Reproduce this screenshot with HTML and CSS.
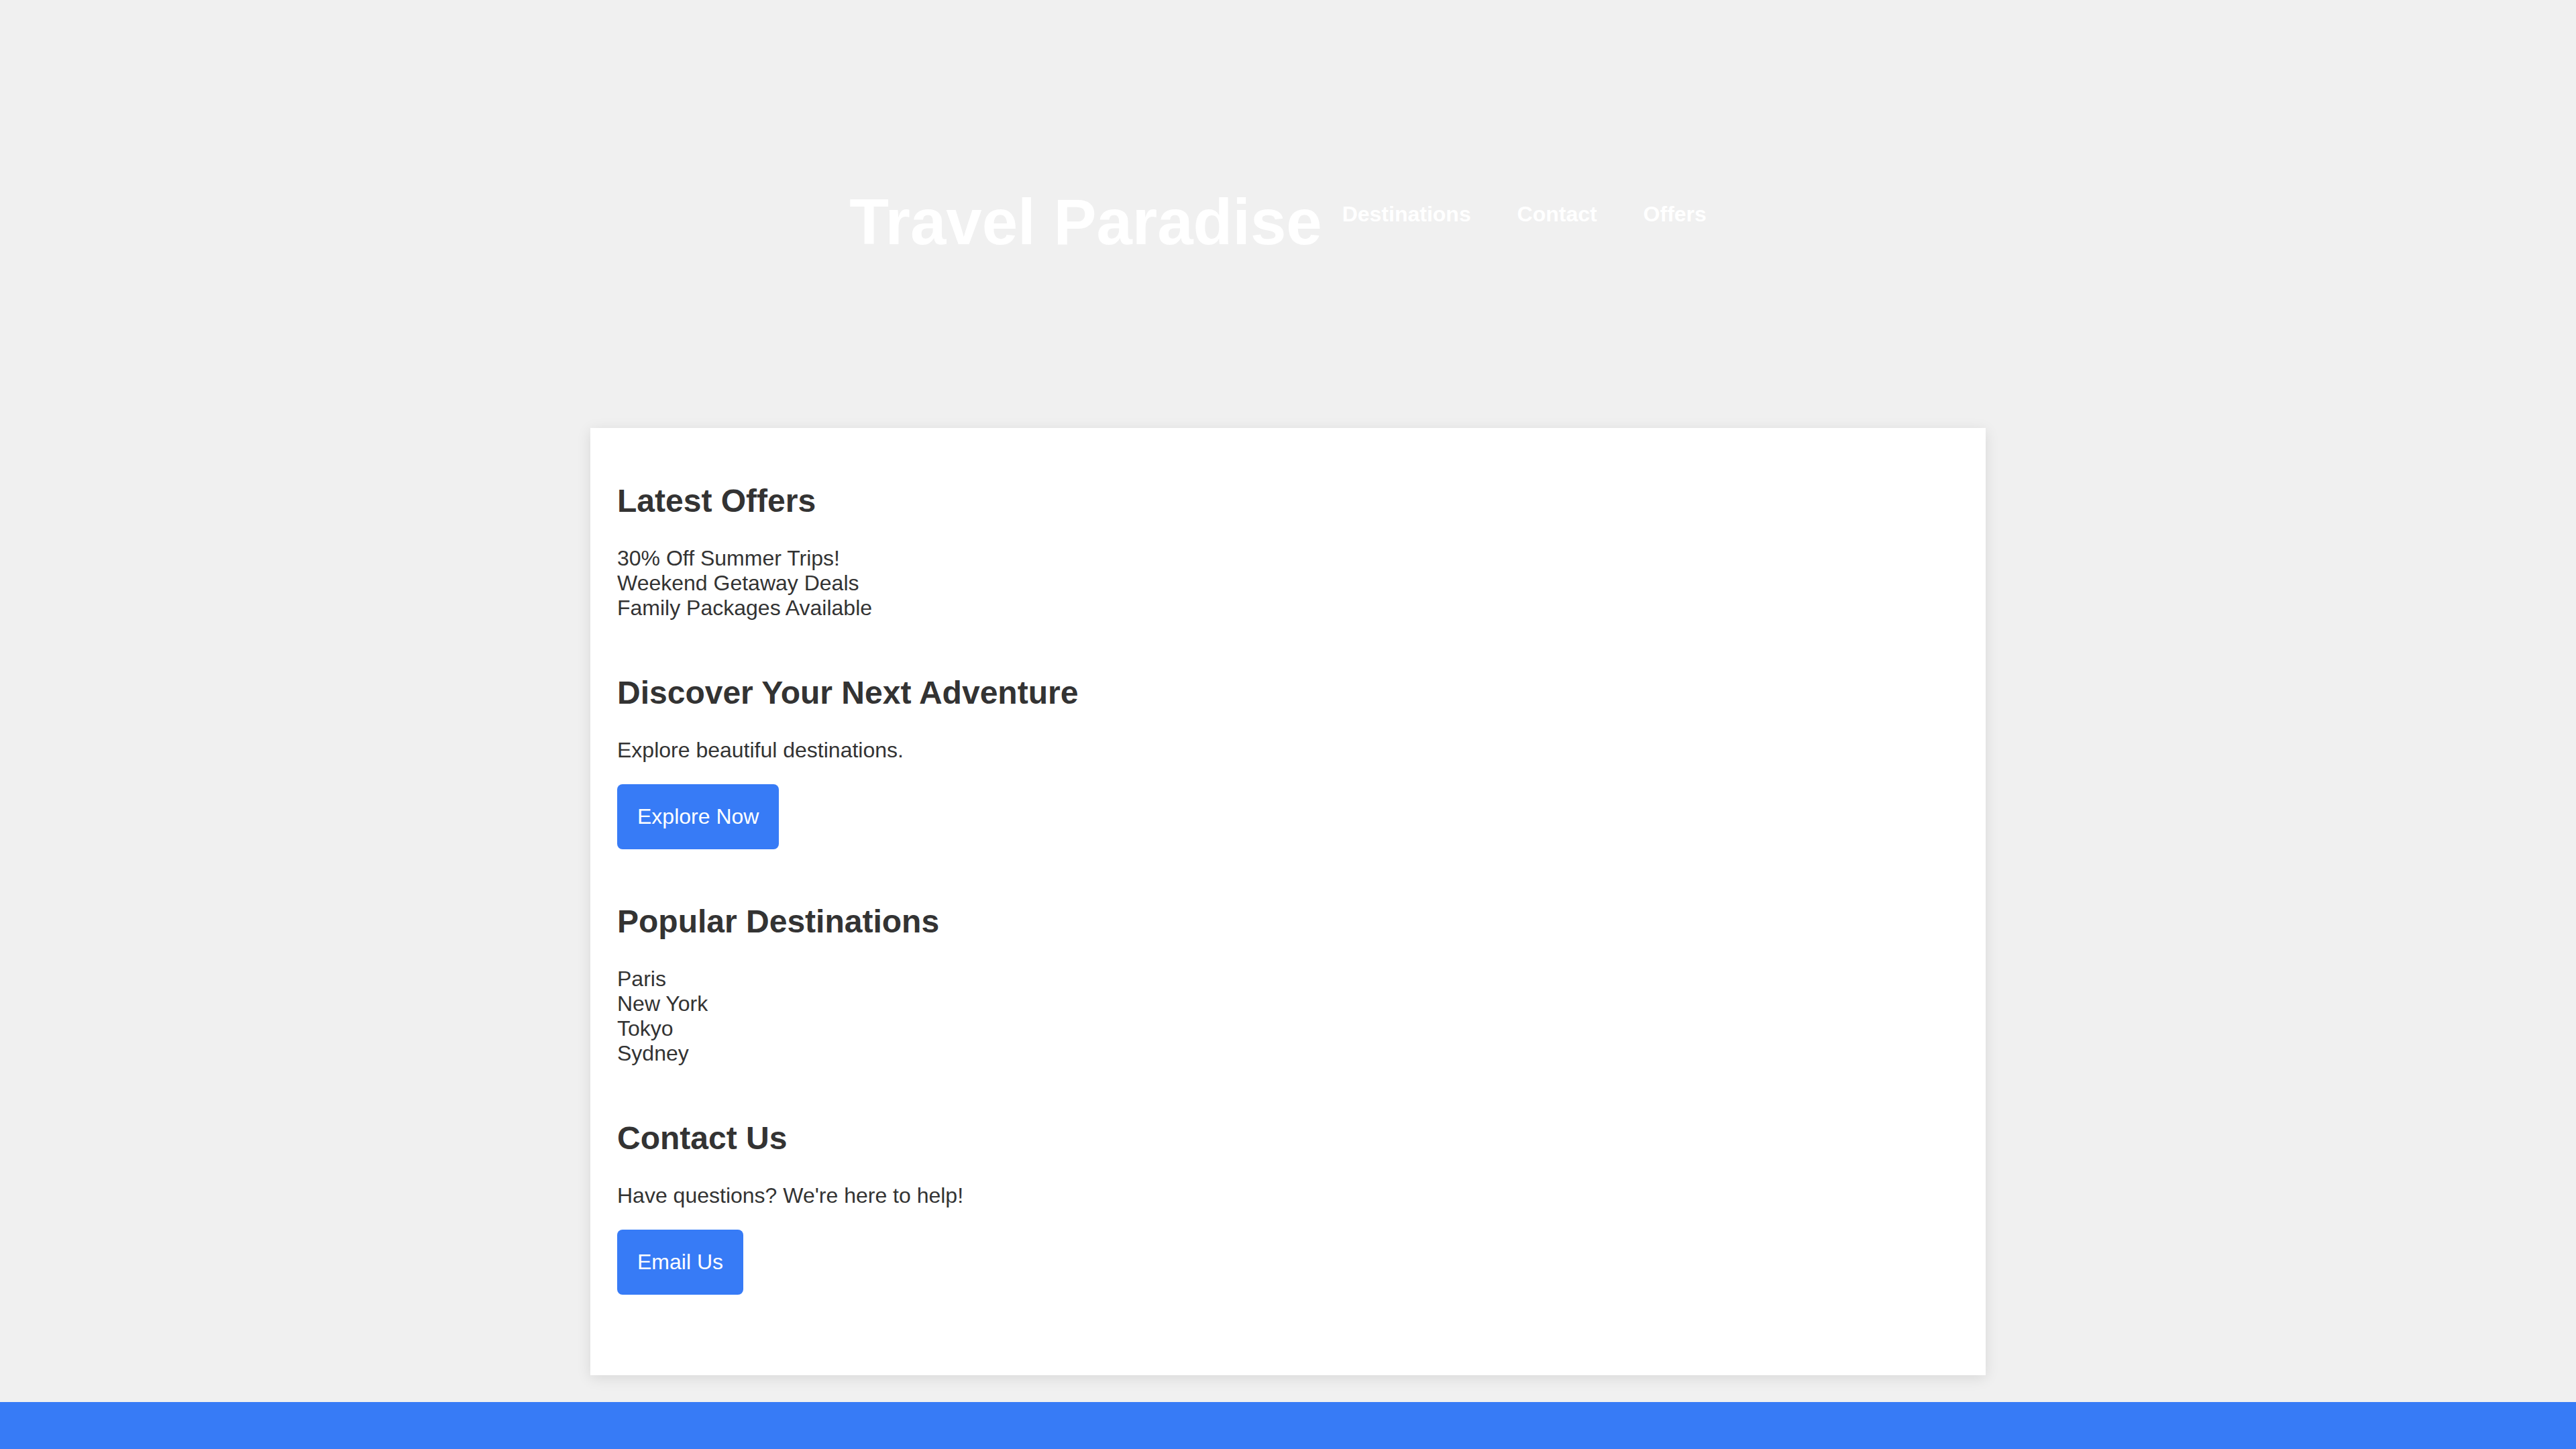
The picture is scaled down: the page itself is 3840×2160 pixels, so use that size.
FILE: index.html
```html
<!DOCTYPE html>
<html lang="en">

<head>
    <meta charset="UTF-8">
    <meta name="viewport" content="width=device-width, initial-scale=1.0">
    <title>Travel Paradise</title>
    <link rel="stylesheet" href="styles.css">
</head>

<body>
    <!-- Header -->
    <header class="header">
        <h1>Travel Paradise</h1>
        <nav class="nav">
            <a href="#destinations">Destinations</a>
            <a href="#contact">Contact</a>
            <a href="#offers">Offers</a>
        </nav>
    </header>

    <!-- Main content -->
    <main class="container">
        <section id="offers" class="section">
            <h2>Latest Offers</h2>
            <ul class="plain-list">
                <li>30% Off Summer Trips!</li>
                <li>Weekend Getaway Deals</li>
                <li>Family Packages Available</li>
            </ul>
        </section>

        <section class="section">
            <h2>Discover Your Next Adventure</h2>
            <p>Explore beautiful destinations.</p>
            <button class="btn">Explore Now</button>
        </section>

        <section id="destinations" class="section">
            <h2>Popular Destinations</h2>
            <ul class="plain-list">
                <li>Paris</li>
                <li>New York</li>
                <li>Tokyo</li>
                <li>Sydney</li>
            </ul>
        </section>

        <section id="contact" class="section">
            <h2>Contact Us</h2>
            <p>Have questions? We're here to help!</p>
            <button class="btn">Email Us</button>
        </section>
    </main>

    <footer class="footer"></footer>
</body>

</html>
```

FILE: styles.css
```css
/* General */
body {
    font-family: 'Liberation Sans', Arial, sans-serif;
    font-size: 32px;
    margin: 0;
    padding: 0;
    background-color: #f0f0f0;
    color: #333;
}

/* Header */
.header {
    display: flex;
    justify-content: center;
    align-items: center;
    padding: 200px 0;
    color: white;
}

.header h1 {
    font-size: 96px;
    margin: 76px 0 52px;
}

.nav a {
    color: white;
    font-weight: bold;
    text-decoration: none;
    margin: 0 30px;
}

/* Content card */
.container {
    max-width: 2000px;
    margin: 0 auto 40px;
    padding: 41px 40px 40px;
    background-color: #fff;
    box-shadow: 0 4px 20px rgba(0, 0, 0, 0.1);
}

.section {
    margin-bottom: 80px;
}

.section h2 {
    font-size: 48px;
    margin: 40px 0;
}

.section p {
    margin: 32px 0;
}

.plain-list {
    list-style: none;
    margin: 32px 0;
    padding: 0;
}

/* Buttons */
.btn {
    background-color: #377bf6;
    color: white;
    font-family: inherit;
    font-size: 32px;
    padding: 30px;
    border: none;
    border-radius: 8px;
    cursor: pointer;
}

/* Footer */
.footer {
    background-color: #377bf6;
    height: 70px;
}
```
